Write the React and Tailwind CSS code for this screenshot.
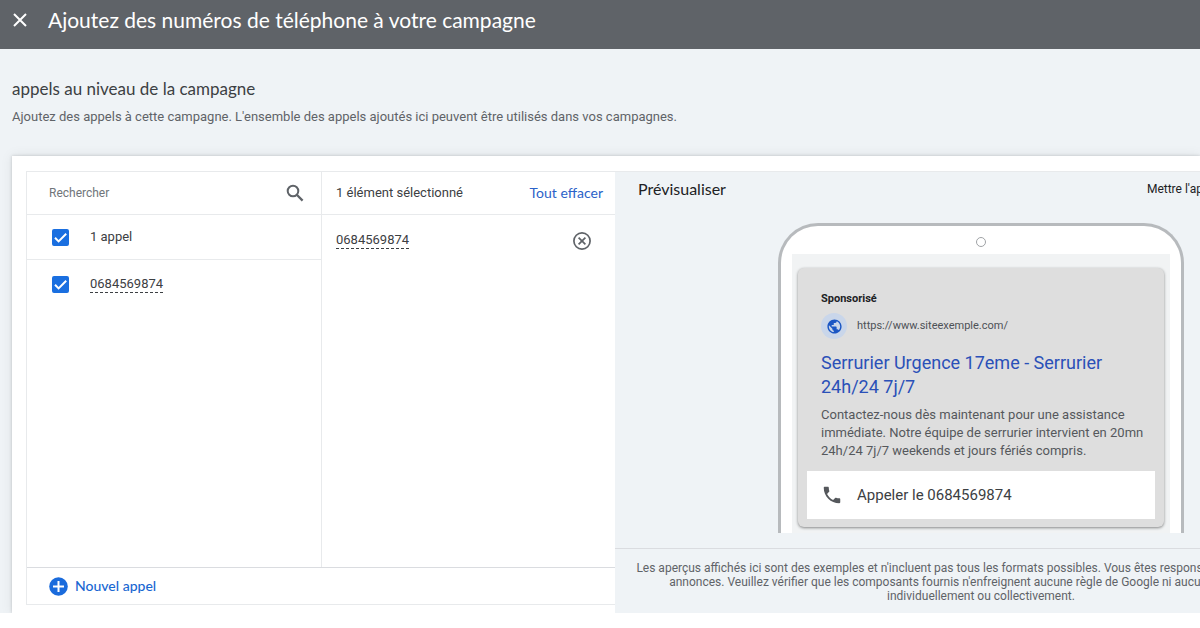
import React from "react";

function CheckBox({ id, label }) {
  return (
    <span className="relative flex h-[17px] w-[17px] shrink-0">
      <input
        id={id}
        type="checkbox"
        defaultChecked
        aria-label={label}
        className="peer h-[17px] w-[17px] appearance-none rounded-xs border-2 border-[#5f6368] bg-white checked:border-[#1a6fe0] checked:bg-[#1a6fe0]"
      />
      <svg viewBox="0 0 17 17" className="pointer-events-none absolute inset-0 hidden peer-checked:block" aria-hidden="true">
        <path d="M3 8.8l3.6 3.6L14.2 4.8" fill="none" stroke="#fff" strokeWidth="2" />
      </svg>
    </span>
  );
}

function PhonePreview() {
  return (
    <div className="mx-auto w-[406px] rounded-t-[40px] border-3 border-b-0 border-[#b7babd] bg-white px-[11px]">
      <div className="flex h-7 items-center justify-center pt-1">
        <span className="h-[10px] w-[10px] rounded-full border border-[#a0a3a6]" />
      </div>
      <div className="bg-[#f1f3f4] px-[6px] pt-[14px] pb-[6px]">
        <div className="rounded-md bg-[#dedede] px-[9px] pt-[23px] pb-2 shadow-[0_1px_3px_rgba(0,0,0,0.45)]">
          <div className="px-[14px]">
            <p className="text-[11px] leading-4 font-bold text-[#202124]">Sponsorisé</p>
            <div className="mt-[6px] flex items-center gap-[10px]">
              <span className="flex h-[26px] w-[26px] items-center justify-center rounded-full bg-[#c9d6ea]">
                <svg viewBox="0 0 24 24" className="h-[17px] w-[17px]" fill="#1a56c4" aria-hidden="true">
                  <path d="M12 2C6.48 2 2 6.48 2 12s4.48 10 10 10 10-4.48 10-10S17.52 2 12 2zm-1 17.93c-3.95-.49-7-3.85-7-7.93 0-.62.08-1.21.21-1.79L9 15v1c0 1.1.9 2 2 2v1.93zm6.9-2.54c-.26-.81-1-1.39-1.9-1.39h-1v-3c0-.55-.45-1-1-1H8v-2h2c.55 0 1-.45 1-1V7h2c1.1 0 2-.9 2-2v-.41c2.93 1.19 5 4.06 5 7.41 0 2.08-.8 3.97-2.1 5.39z" />
                </svg>
              </span>
              <span className="text-[11px] text-[#4d5156]">https://www.siteexemple.com/</span>
            </div>
            <h3 className="mt-3 text-lg leading-6 text-[#2a50b8]">
              Serrurier Urgence 17eme - Serrurier
              <br />
              24h/24 7j/7
            </h3>
            <p className="mt-[7px] text-[13px] leading-[18px] whitespace-nowrap text-[#55585c]">
              Contactez-nous dès maintenant pour une assistance
              <br />
              immédiate. Notre équipe de serrurier intervient en 20mn
              <br />
              24h/24 7j/7 weekends et jours fériés compris.
            </p>
          </div>
          <button type="button" className="mt-[11px] flex h-12 w-full items-center gap-[14px] bg-white px-[14px] text-[15px] text-[#3c4043]">
            <svg viewBox="0 0 24 24" className="h-[22px] w-[22px]" fill="#55585c" aria-hidden="true">
              <path d="M6.62 10.79c1.44 2.83 3.76 5.14 6.59 6.59l2.2-2.2c.27-.27.67-.36 1.02-.24 1.12.37 2.33.57 3.57.57.55 0 1 .45 1 1V20c0 .55-.45 1-1 1-9.39 0-17-7.61-17-17 0-.55.45-1 1-1h3.5c.55 0 1 .45 1 1 0 1.25.2 2.45.57 3.57.11.35.03.74-.25 1.02l-2.2 2.2z" />
            </svg>
            Appeler le 0684569874
          </button>
        </div>
      </div>
    </div>
  );
}

export default function App() {
  return (
    <div className="overflow-x-hidden bg-white font-['Roboto',sans-serif] text-[#3c4043]">
      <header className="flex h-[49px] items-center gap-5 bg-[#5f6368] px-3 pb-[10px] text-white">
        <button type="button" aria-label="Fermer" className="flex h-4 w-4 items-center justify-center">
          <svg viewBox="0 0 16 16" className="h-4 w-4" aria-hidden="true">
            <path d="M2 2l12 12M14 2L2 14" stroke="#fff" strokeWidth="2" />
          </svg>
        </button>
        <h1 className="font-['Lato',sans-serif] text-[21px] leading-7">Ajoutez des numéros de téléphone à votre campagne</h1>
      </header>

      <main className="overflow-hidden bg-[#eff3f6] pt-7 pl-3">
        <h2 className="font-['Lato',sans-serif] text-[17px] leading-6">appels au niveau de la campagne</h2>
        <p className="mt-[6px] text-[13px] leading-5 text-[#5f6368]">
          Ajoutez des appels à cette campagne. L'ensemble des appels ajoutés ici peuvent être utilisés dans vos campagnes.
        </p>

        <div className="mt-[29px] bg-white pt-[15px] pl-[14px] shadow-[0_0_3px_rgba(0,0,0,0.18),0_0_12px_rgba(0,0,0,0.08)]">
          <div className="flex">
            <section className="mb-2 flex w-[589px] shrink-0 flex-col border border-r-0 border-[#e8eaec]">
              <div className="flex grow">
                <div className="flex w-[295px] flex-col border-r border-[#e8eaec]">
                  <div className="flex h-[43px] items-center border-b border-[#e8eaec] pr-[17px] pl-[22px]">
                    <input
                      type="text"
                      aria-label="Rechercher"
                      placeholder="Rechercher"
                      className="min-w-0 grow bg-transparent text-xs outline-none placeholder:text-[#70757a]"
                    />
                    <svg viewBox="0 0 18 18" className="h-[18px] w-[18px]" fill="none" stroke="#5f6368" strokeWidth="2" aria-hidden="true">
                      <circle cx="7" cy="7" r="5.3" />
                      <path d="M10.8 10.8l5.8 5.8" strokeWidth="2.3" />
                    </svg>
                  </div>
                  <div className="flex h-[45px] items-center gap-[21px] border-b border-[#e8eaec] pl-[25px]">
                    <CheckBox id="all" label="Tout sélectionner" />
                    <label htmlFor="all" className="text-[13px]">1 appel</label>
                  </div>
                  <div className="flex h-12 items-center gap-[21px] pl-[25px]">
                    <CheckBox id="number" label="0684569874" />
                    <label htmlFor="number" className="border-b border-dashed border-[#3c4043] text-[13px] leading-4">0684569874</label>
                  </div>
                </div>
                <div className="flex grow flex-col">
                  <div className="flex h-[43px] items-center justify-between border-b border-[#e8eaec] pr-3 pl-[14px]">
                    <span className="text-[13px]">1 élément sélectionné</span>
                    <button type="button" className="font-['Lato',sans-serif] text-sm text-[#2b62c9]">Tout effacer</button>
                  </div>
                  <div className="flex h-[51px] items-center justify-between pr-6 pl-[14px]">
                    <span className="border-b border-dashed border-[#3c4043] text-[13px] leading-4">0684569874</span>
                    <button type="button" aria-label="Supprimer" className="flex h-[18px] w-[18px]">
                      <svg viewBox="0 0 18 18" className="h-[18px] w-[18px]" fill="none" stroke="#5f6368" aria-hidden="true">
                        <circle cx="9" cy="9" r="8.1" strokeWidth="1.7" />
                        <path d="M5.6 5.6l6.8 6.8M12.4 5.6l-6.8 6.8" strokeWidth="1.7" />
                      </svg>
                    </button>
                  </div>
                </div>
              </div>
              <div className="h-[37px] border-t border-[#dadce0] pl-[22px]">
                <button type="button" className="flex h-full items-center gap-[7px] font-['Lato',sans-serif] text-sm font-medium text-[#1967d2]">
                  <svg viewBox="0 0 19 19" className="h-[19px] w-[19px]" aria-hidden="true">
                    <circle cx="9.5" cy="9.5" r="9.3" fill="#1a6bdc" />
                    <path d="M9.5 4v11M4 9.5h11" stroke="#fff" strokeWidth="2" />
                  </svg>
                  Nouvel appel
                </button>
              </div>
            </section>

            <section className="w-[732px] shrink-0 border-t border-[#e8eaec] bg-[#eff3f6]">
              <div className="flex h-[51px] items-start justify-between pt-[7px] pr-[88px] pl-[23px]">
                <h2 className="font-['Lato',sans-serif] text-base leading-5 text-[#202124]">Prévisualiser</h2>
                <button type="button" className="text-xs leading-5 text-[#202124]">Mettre l'aperçu à jour</button>
              </div>
              <PhonePreview />
              <p className="mt-[15px] border-t border-[#dadce0] pt-[12px] pb-[10px] text-center text-xs leading-[14px] whitespace-nowrap text-[#5f6368]">
                Les aperçus affichés ici sont des exemples et n'incluent pas tous les formats possibles. Vous êtes responsable du contenu de vos
                <br />
                annonces. Veuillez vérifier que les composants fournis n'enfreignent aucune règle de Google ni aucune loi, que ce soit
                <br />
                individuellement ou collectivement.
              </p>
            </section>
          </div>
        </div>
      </main>
    </div>
  );
}
